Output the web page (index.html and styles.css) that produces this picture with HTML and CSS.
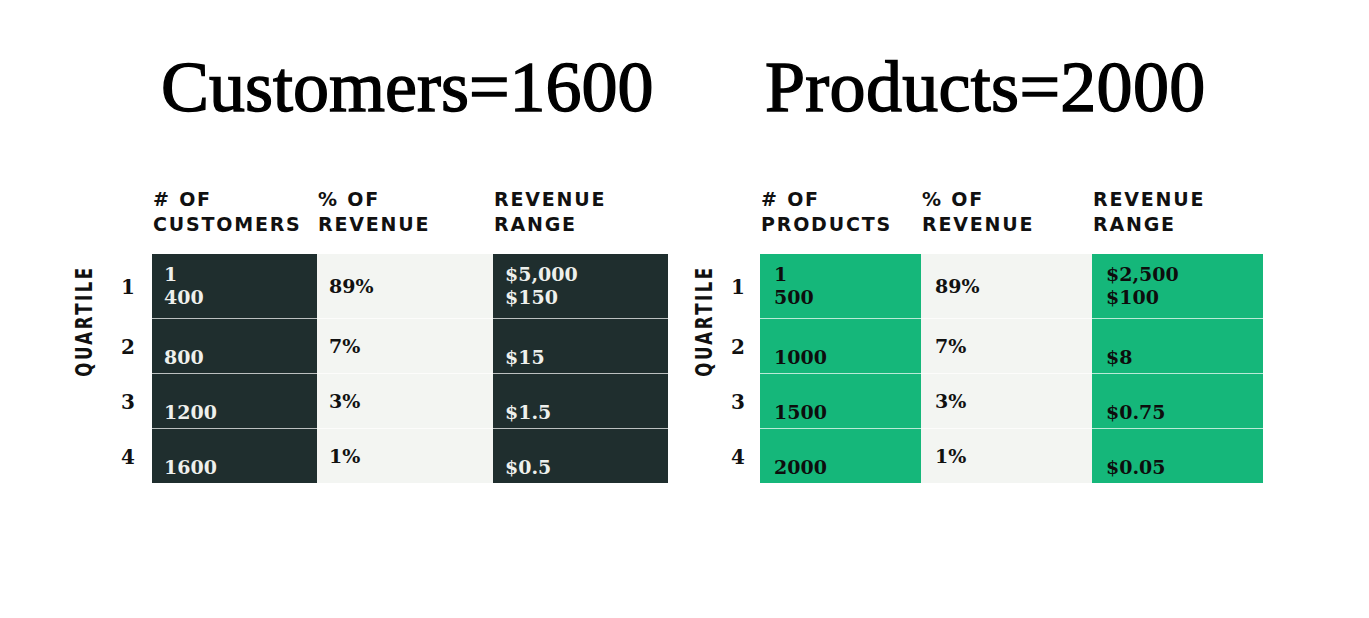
FILE: index.html
```html
<!DOCTYPE html>
<html lang="en">
<head>
<meta charset="utf-8">
<title>Customers and Products quartiles</title>
<link rel="stylesheet" href="styles.css">
</head>
<body>
<main class="page">
  <section class="panel panel--customers">
    <h1 class="title">Customers=1600</h1>
    <div class="grid">
      <div class="spacer"></div>
      <div class="hd"># OF<br>CUSTOMERS</div>
      <div class="hd">% OF<br>REVENUE</div>
      <div class="hd">REVENUE<br>RANGE</div>

      <div class="axis">QUARTILE</div>

      <div class="num">1</div>
      <div class="cell fill"><span class="v">1</span><span class="v">400</span></div>
      <div class="cell plain"><span class="v">89%</span></div>
      <div class="cell fill"><span class="v">$5,000</span><span class="v">$150</span></div>

      <div class="num">2</div>
      <div class="cell fill sep"><span class="v"></span><span class="v">800</span></div>
      <div class="cell plain sep"><span class="v">7%</span></div>
      <div class="cell fill sep"><span class="v"></span><span class="v">$15</span></div>

      <div class="num">3</div>
      <div class="cell fill sep"><span class="v"></span><span class="v">1200</span></div>
      <div class="cell plain sep"><span class="v">3%</span></div>
      <div class="cell fill sep"><span class="v"></span><span class="v">$1.5</span></div>

      <div class="num">4</div>
      <div class="cell fill sep"><span class="v"></span><span class="v">1600</span></div>
      <div class="cell plain sep"><span class="v">1%</span></div>
      <div class="cell fill sep"><span class="v"></span><span class="v">$0.5</span></div>
    </div>
  </section>

  <section class="panel panel--products">
    <h1 class="title">Products=2000</h1>
    <div class="grid">
      <div class="spacer"></div>
      <div class="hd"># OF<br>PRODUCTS</div>
      <div class="hd">% OF<br>REVENUE</div>
      <div class="hd">REVENUE<br>RANGE</div>

      <div class="axis">QUARTILE</div>

      <div class="num">1</div>
      <div class="cell fill"><span class="v">1</span><span class="v">500</span></div>
      <div class="cell plain"><span class="v">89%</span></div>
      <div class="cell fill"><span class="v">$2,500</span><span class="v">$100</span></div>

      <div class="num">2</div>
      <div class="cell fill sep"><span class="v"></span><span class="v">1000</span></div>
      <div class="cell plain sep"><span class="v">7%</span></div>
      <div class="cell fill sep"><span class="v"></span><span class="v">$8</span></div>

      <div class="num">3</div>
      <div class="cell fill sep"><span class="v"></span><span class="v">1500</span></div>
      <div class="cell plain sep"><span class="v">3%</span></div>
      <div class="cell fill sep"><span class="v"></span><span class="v">$0.75</span></div>

      <div class="num">4</div>
      <div class="cell fill sep"><span class="v"></span><span class="v">2000</span></div>
      <div class="cell plain sep"><span class="v">1%</span></div>
      <div class="cell fill sep"><span class="v"></span><span class="v">$0.05</span></div>
    </div>
  </section>
</main>
</body>
</html>
```

FILE: styles.css
```css
html, body {
  margin: 0;
  background: #ffffff;
}

body {
  font-family: "DejaVu Serif", serif;
  color: #111;
}

.page {
  display: grid;
  grid-template-columns: 593px 568px;
  column-gap: 27px;
  padding: 50px 0 0 75px;
}

.panel {
  display: flex;
  flex-direction: column;
}

.title {
  margin: 0;
  font-family: "Liberation Serif", "Times New Roman", serif;
  font-weight: 400;
  font-size: 72px;
  line-height: 74px;
  letter-spacing: 0;
  color: #000;
  -webkit-text-stroke: 1.4px #000;
  white-space: nowrap;
}

.panel--customers .title { margin-left: 86px; }
.panel--products .title { margin-left: 70px; letter-spacing: 0.3px; }

.grid {
  display: grid;
  margin-top: 63px;
  grid-template-rows: auto 64px 55px 55px 55px;
}

.panel--customers .grid {
  grid-template-columns: 46px 31px 165px 176px 175px;
  --pad: 12px;
  --fill: #1f2e2e;
  --fill-ink: #eef0ec;
}

.panel--products .grid {
  grid-template-columns: 36px 29px 161px 171px 171px;
  --pad: 14px;
  --fill: #15b77a;
  --fill-ink: #0d0d0d;
}

.spacer {
  grid-column: 1 / span 2;
}

.hd {
  font-family: "DejaVu Sans", sans-serif;
  font-weight: 700;
  font-size: 19px;
  line-height: 24.5px;
  letter-spacing: 1.8px;
  color: #111;
  padding-left: 1px;
  margin-bottom: 18px;
  white-space: nowrap;
}

.axis {
  grid-column: 1;
  grid-row: 2 / span 4;
  align-self: start;
  justify-self: start;
  margin-top: 0;
  margin-left: -1px;
  writing-mode: vertical-rl;
  transform: rotate(180deg) scale(1.15, 0.83);
  font-family: "DejaVu Sans", sans-serif;
  font-weight: 700;
  font-size: 20px;
  line-height: 20px;
  letter-spacing: 3px;
  color: #111;
}

.num {
  grid-column: 2;
  display: flex;
  align-items: center;
  font-weight: 700;
  font-size: 20px;
  line-height: 23px;
  color: #111;
  padding-top: 3px;
}

.cell {
  display: flex;
  flex-direction: column;
  justify-content: center;
  padding: 0 var(--pad);
  font-weight: 700;
  font-size: 19px;
  line-height: 23px;
  box-sizing: border-box;
}

.cell .v {
  display: block;
  min-height: 23px;
}

.fill {
  background: var(--fill);
  color: var(--fill-ink);
}

.plain {
  background: #f3f5f2;
  color: #111;
}

.sep {
  border-top: 1px solid rgba(255, 255, 255, 0.7);
}
```
